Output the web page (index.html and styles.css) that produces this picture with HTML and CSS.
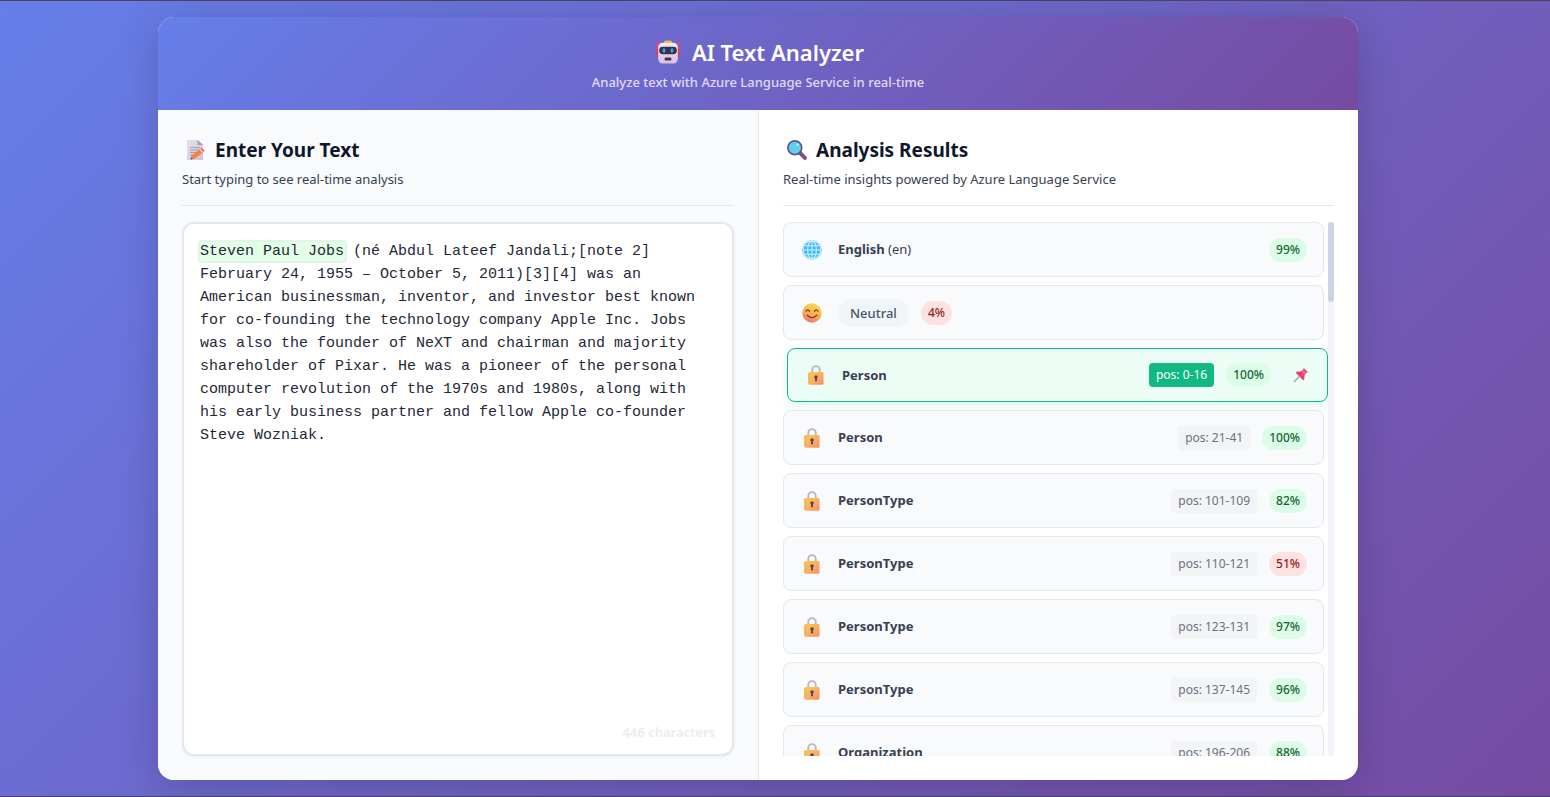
FILE: index.html
```html
<!DOCTYPE html>
<html lang="en">
<head>
<meta charset="utf-8">
<title>AI Text Analyzer</title>
<link rel="stylesheet" href="styles.css">
</head>
<body>
<svg class="sprite" aria-hidden="true">
  <defs>
    <linearGradient id="gold" x1="0" y1="0" x2="1" y2="1"><stop offset="0" stop-color="#fcc850"/><stop offset=".5" stop-color="#fbb15c"/><stop offset="1" stop-color="#f88a72"/></linearGradient>
    <linearGradient id="face" x1=".7" y1="0" x2=".3" y2="1"><stop offset="0" stop-color="#ffdc50"/><stop offset=".6" stop-color="#f9a84e"/><stop offset="1" stop-color="#f0707c"/></linearGradient>
    <linearGradient id="head" x1="0" y1="0" x2="0" y2="1"><stop offset="0" stop-color="#f3eef6"/><stop offset="1" stop-color="#d5bfe2"/></linearGradient>
    <linearGradient id="sheet" x1="0" y1="0" x2="1" y2="1"><stop offset="0" stop-color="#e6dff0"/><stop offset="1" stop-color="#cdc2d8"/></linearGradient>
    <symbol id="lock" viewBox="0 0 20 20"><path d="M6.3 8V4.8a3.7 3.7 0 0 1 7.4 0V8" fill="none" stroke="#bdb4c6" stroke-width="1.9"/><rect x="2.5" y="7" width="15" height="12.8" rx="1.3" fill="url(#gold)"/><path d="M2.9 8v10.5" stroke="#e99a4c" stroke-width=".8"/><circle cx="10" cy="12" r="1.8" fill="#5a4668"/><path d="M9.2 12h1.6l.3 4.3H8.9z" fill="#5a4668"/></symbol>
  </defs>
</svg>
<main class="app">
  <header class="app-header">
    <h1 class="app-title">
      <svg class="robot" viewBox="0 0 24 24" aria-hidden="true"><path d="M1.2 1.5v14M22.8 1.5v14" stroke="#ee3f6c" stroke-width="1.5" stroke-linecap="round"/><path d="M.8 10h2v7h-2zM21.2 10h2v7h-2z" fill="#d9365f"/><rect x="8" y=".5" width="8" height="4" rx="1.5" fill="#f9b13f"/><rect x="2.2" y="2.8" width="19.6" height="20.7" rx="4.5" fill="url(#head)"/><rect x="3.2" y="6.8" width="17.6" height="7.4" rx="3.4" fill="#39304b"/><ellipse cx="8" cy="10.5" rx="1.4" ry="2.3" fill="#35a7ef"/><ellipse cx="16" cy="10.5" rx="1.4" ry="2.3" fill="#35a7ef"/><rect x="8.6" y="17.6" width="6.8" height="3" rx="1.3" fill="#42334f"/></svg>
      AI Text Analyzer
    </h1>
    <p class="app-subtitle">Analyze text with Azure Language Service in real-time</p>
  </header>
  <div class="panels">
    <section class="panel panel-input">
      <div class="panel-header">
        <h2 class="panel-title">
          <svg class="title-icon" viewBox="0 0 20 20" aria-hidden="true"><path d="M1 0h11l5 4.5V20H1z" fill="url(#sheet)"/><path d="M11.5 0v5H17z" fill="#a99db8"/><path d="M4 7.5h10M4 10h10M4 12.5h8M4 15h5" stroke="#a197b0" stroke-width=".9"/><path d="m4.5 19.5 1.2-4L14 8.9l3.3 3.3L9 18.4z" fill="#fa813c"/><path d="m14 8.9 1.7-1.2 3.1 3.1-1.5 1.4z" fill="#f4617a"/><path d="m13.2 9.6 1-.9 3.2 3.4-1 .8z" fill="#d9d0e4"/><path d="m4.5 19.5.7-2.2 1.8 1.5z" fill="#5b4660"/></svg>
          <label for="source">Enter Your Text</label>
        </h2>
        <p class="panel-subtitle">Start typing to see real-time analysis</p>
      </div>
      <div class="editor">
        <div class="highlights" aria-hidden="true"><span class="highlight"></span></div>
        <textarea class="editor-text" id="source" spellcheck="false">Steven Paul Jobs (né Abdul Lateef Jandali;[note 2] February 24, 1955 – October 5, 2011)[3][4] was an American businessman, inventor, and investor best known for co-founding the technology company Apple Inc. Jobs was also the founder of NeXT and chairman and majority shareholder of Pixar. He was a pioneer of the personal computer revolution of the 1970s and 1980s, along with his early business partner and fellow Apple co-founder Steve Wozniak.</textarea>
        <span class="char-count">446 characters</span>
      </div>
    </section>
    <section class="panel panel-results">
      <div class="panel-header">
        <h2 class="panel-title">
          <svg class="title-icon" viewBox="0 0 20 20" aria-hidden="true"><path d="m12.5 12.5 5.4 5.4" stroke="#84507f" stroke-width="4" stroke-linecap="round"/><path d="m12 12 2.4 2.4" stroke="#58627e" stroke-width="2.2"/><circle cx="7.8" cy="7.8" r="6.9" fill="#62cdec" stroke="#5a5a8c" stroke-width="1.7"/><circle cx="10.7" cy="4.8" r="1.2" fill="#b7ecf8"/></svg>
          Analysis Results
        </h2>
        <p class="panel-subtitle">Real-time insights powered by Azure Language Service</p>
      </div>
      <div class="results">
        <ul class="result-list">
          <li class="result"><svg class="result-icon" viewBox="0 0 20 20" aria-hidden="true"><circle cx="10" cy="10" r="9.7" fill="#45b7f2"/><g fill="none" stroke="#c9f1ff" stroke-width="1.1"><circle cx="10" cy="10" r="8.9"/><ellipse cx="10" cy="10" rx="4.4" ry="8.9"/><path d="M10 1v18M1 10h18M2.5 5.7h15M2.5 14.3h15"/></g></svg><span class="result-name"><strong>English</strong> (en)</span><span class="score high">99%</span></li>
          <li class="result"><svg class="result-icon" viewBox="0 0 20 20" aria-hidden="true"><circle cx="10" cy="10" r="9.7" fill="url(#face)"/><g fill="none" stroke="#65433e" stroke-width="1.3" stroke-linecap="round"><path d="M4 8.2q1.7-2.8 3.5 0M12.5 8.2q1.7-2.8 3.5 0M5.2 12.2q4.8 4.8 9.6 0"/></g></svg><span class="sentiment">Neutral</span><span class="score low">4%</span></li>
          <li class="result selected"><svg class="result-icon"><use href="#lock"/></svg><strong class="result-name">Person</strong><span class="position">pos: 0-16</span><span class="score high">100%</span><svg class="pin" viewBox="0 0 16 16" role="img" aria-label="Pinned"><path d="m1 15 5-5.5" stroke="#a5a5b2" stroke-width="1.4"/><path d="m2.6 5.6 2.1-1 2.7.2 3-2.4L10.5.8l4.7 4.6-1.5.2-2.4 3 .2 2.8-1.2 2z" fill="#ea3d70"/><path d="m7.4 4.8 3-2.4 3.2 3.2-2.4 3-2 .4z" fill="#f3628a"/><path d="m7.4 4.8 3.9 3.8" stroke="#b9305d" stroke-width=".9"/></svg></li>
          <li class="result"><svg class="result-icon"><use href="#lock"/></svg><strong class="result-name">Person</strong><span class="position">pos: 21-41</span><span class="score high">100%</span></li>
          <li class="result"><svg class="result-icon"><use href="#lock"/></svg><strong class="result-name">PersonType</strong><span class="position">pos: 101-109</span><span class="score high">82%</span></li>
          <li class="result"><svg class="result-icon"><use href="#lock"/></svg><strong class="result-name">PersonType</strong><span class="position">pos: 110-121</span><span class="score low">51%</span></li>
          <li class="result"><svg class="result-icon"><use href="#lock"/></svg><strong class="result-name">PersonType</strong><span class="position">pos: 123-131</span><span class="score high">97%</span></li>
          <li class="result"><svg class="result-icon"><use href="#lock"/></svg><strong class="result-name">PersonType</strong><span class="position">pos: 137-145</span><span class="score high">96%</span></li>
          <li class="result"><svg class="result-icon"><use href="#lock"/></svg><strong class="result-name">Organization</strong><span class="position">pos: 196-206</span><span class="score high">88%</span></li>
        </ul>
        <div class="track" aria-hidden="true"><div class="thumb"></div></div>
      </div>
    </section>
  </div>
</main>
</body>
</html>
```
FILE: styles.css
```css
* {
  box-sizing: border-box;
}

body {
  display: flex;
  justify-content: center;
  height: 100vh;
  margin: 0;
  padding: 16px 50px 16px 16px;
  border: solid #4a4458;
  border-width: 1px 0;
  background: linear-gradient(135deg, #667eea 0%, #764ba2 100%);
  color: #374151;
  font: 13px/19px "Noto Sans", "Open Sans", sans-serif;
}

h1, h2, p, ul {
  margin: 0;
  padding: 0;
}

.sprite {
  position: absolute;
  width: 0;
  height: 0;
}

.app {
  display: flex;
  flex-direction: column;
  width: 100%;
  max-width: 1200px;
  overflow: hidden;
  border-radius: 16px;
  background: #fff;
  box-shadow: 0 8px 40px rgba(0, 0, 0, 0.18);
}

.app-header {
  padding: 16px;
  background: linear-gradient(135deg, #667eea 0%, #764ba2 100%);
  color: #fff;
  text-align: center;
}

.app-title {
  display: flex;
  align-items: center;
  justify-content: center;
  gap: 12px;
  padding-left: 4px;
  font-size: 22px;
  font-weight: 600;
  line-height: 38px;
}

.robot {
  width: 24px;
  height: 24px;
}

.app-subtitle {
  color: #e1daf3;
  font-weight: 500;
  line-height: 23px;
}

.panels {
  display: grid;
  flex: 1;
  grid-template-columns: 1fr 1fr;
  min-height: 0;
}

.panel {
  display: flex;
  flex-direction: column;
  min-width: 0;
  min-height: 0;
  padding: 24px;
}

.panel-input {
  background: #f8fafc;
}

.panel-results {
  border-left: 1px solid #e2e8f0;
}

.panel-header {
  margin-bottom: 16px;
  padding-bottom: 16px;
  border-bottom: 1px solid #e2e8f0;
}

.panel-title {
  display: flex;
  align-items: center;
  gap: 9px;
  margin-bottom: 4px;
  padding-left: 4px;
  color: #0f172a;
  font-size: 19px;
  font-weight: 700;
  line-height: 32px;
}

.title-icon {
  width: 20px;
  height: 20px;
}

.editor {
  position: relative;
  display: grid;
  flex: 1;
  overflow: hidden;
  border: 2px solid #e2e8f0;
  border-radius: 12px;
  background: #fff;
  box-shadow: 0 1px 3px rgba(0, 0, 0, 0.06);
}

.highlights,
.editor-text {
  grid-area: 1 / 1;
  padding: 16px;
  font: 15px/23px "Liberation Mono", "Courier New", monospace;
}

.highlight {
  display: block;
  width: calc(16ch + 5px);
  height: 23px;
  margin-left: -2px;
  border: 2px solid #e0f5e5;
  border-radius: 4px;
  background: #e3fee6;
}

.editor-text {
  width: 100%;
  border: 0;
  outline: 0;
  background: transparent;
  color: #1f2937;
  resize: none;
}

.char-count {
  position: absolute;
  right: 17px;
  bottom: 12px;
  color: #ececee;
  font-weight: 600;
}

.results {
  display: flex;
  flex: 1;
  min-height: 0;
}

.result-list {
  display: flex;
  flex: 1;
  flex-direction: column;
  gap: 8px;
  padding-right: 4px;
  overflow-y: auto;
  list-style: none;
  scrollbar-width: none;
}

.result {
  display: flex;
  flex-shrink: 0;
  align-items: center;
  gap: 12px;
  min-height: 55px;
  padding: 8px 16px;
  border: 1px solid #e2e8f0;
  border-radius: 8px;
  background: #f8fafc;
}

.result.selected {
  min-height: 54px;
  margin: 0 -4px 0 4px;
  border-color: #10b981;
  background: #ecfdf5;
  box-shadow: 0 4px 12px rgba(16, 185, 129, 0.15);
}

.result-icon {
  width: 20px;
  height: 20px;
  margin: 0 4px 0 2px;
}

.result-name {
  flex: 1;
}

.position {
  padding: 0 7px;
  border-radius: 4px;
  background: #f3f4f6;
  color: #6b7280;
  font-size: 12px;
  line-height: 24px;
}

.selected .position {
  background: #10b981;
  color: #fff;
}

.score {
  padding: 0 7px;
  border-radius: 12px;
  font-size: 12px;
  font-weight: 500;
  line-height: 24px;
}

.high {
  background: #dcfce7;
  color: #166534;
}

.low {
  background: #fee2e2;
  color: #991b1b;
}

.sentiment {
  padding: 0 12px;
  border-radius: 14px;
  background: #f1f5f9;
  color: #475569;
  font-weight: 500;
  line-height: 28px;
}

.pin {
  width: 16px;
  height: 16px;
  margin: 0 2px 0 10px;
}

.track {
  width: 6px;
  border-radius: 3px;
  background: #f1f5f9;
}

.thumb {
  height: 15%;
  border-radius: 3px;
  background: #cbd5e1;
}
```
